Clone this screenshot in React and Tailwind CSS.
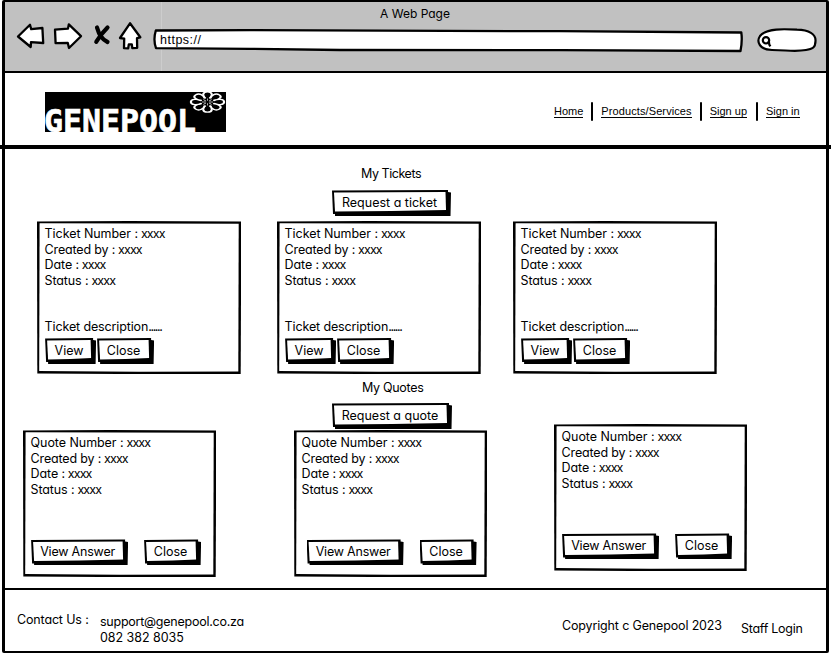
import React from "react";

const font = "font-['Inter','Open_Sans',sans-serif] [font-feature-settings:'cv11','calt'_0]";

function SketchButton({ children, className = "" }) {
  return (
    <button
      type="button"
      className={`relative isolate flex h-[26px] shrink-0 items-center justify-center pr-[4px] leading-none whitespace-nowrap before:absolute before:inset-0 before:-z-20 before:bg-black before:content-[''] before:[clip-path:polygon(0_0.5px,calc(100%-3px)_0,calc(100%-3px)_2px,100%_2.5px,calc(100%-0.5px)_100%,3px_100%,3px_calc(100%-2px),1px_calc(100%-2px))] after:absolute after:inset-0 after:-z-10 after:bg-white after:content-[''] after:[clip-path:polygon(2px_2.5px,calc(100%-5.5px)_2px,calc(100%-5px)_calc(100%-6px),50%_calc(100%-5px),3px_calc(100%-4.5px))] ${className}`}
    >
      {children}
    </button>
  );
}

function Card({ children, className = "" }) {
  return (
    <article
      className={`relative isolate shrink-0 pt-[5px] pl-[7.6px] leading-[15.6px] before:absolute before:inset-0 before:-z-20 before:bg-black before:content-[''] before:[clip-path:polygon(0_0.5px,45%_0,100%_0.5px,100%_50%,calc(100%-0.3px)_100%,40%_100%,0.3px_calc(100%-0.5px))] after:absolute after:inset-0 after:-z-10 after:bg-white after:content-[''] after:[clip-path:polygon(2.6px_2.3px,50%_2.4px,calc(100%-2.3px)_2.8px,calc(100%-2.7px)_calc(100%-2.6px),50%_calc(100%-2.2px),2.2px_calc(100%-3px))] ${className}`}
    >
      {children}
    </article>
  );
}

function Field({ label, className = "" }) {
  return (
    <p className={className}>
      {label} : <span className="-ml-[0.5px] tracking-[-0.9px]">xxxx</span>
    </p>
  );
}

function Details({ kind }) {
  return (
    <>
      <Field label={`${kind} Number`} className="tracking-[-0.06px]" />
      <Field label="Created by" className="tracking-[-0.16px]" />
      <Field label="Date" className="tracking-[-0.12px]" />
      <Field label="Status" className="tracking-[-0.12px]" />
    </>
  );
}

function TicketCard({ className = "" }) {
  return (
    <Card className={`h-[153px] w-[204px] ${className}`}>
      <Details kind="Ticket" />
      <p className="mt-[31px] tracking-[-0.13px]">
        Ticket description<span className="tracking-[-1.4px]">......</span>
      </p>
      <div className="mt-[3px] ml-[0.5px] flex gap-[1px]">
        <SketchButton className="w-[51px] pl-[1px]">View</SketchButton>
        <SketchButton className="w-[57px]">Close</SketchButton>
      </div>
    </Card>
  );
}

function QuoteCard({ className, actions = "ml-[0.5px]" }) {
  return (
    <Card className={`h-[147px] w-[193px] ${className}`}>
      <Details kind="Quote" />
      <div className={`mt-[42px] flex gap-[16px] ${actions}`}>
        <SketchButton className="w-[97px] tracking-[-0.2px]">View Answer</SketchButton>
        <SketchButton className="w-[57px]">Close</SketchButton>
      </div>
    </Card>
  );
}

function BrowserBar() {
  return (
    <div className="relative h-[71px] border-b-[2.5px] border-black bg-[#c1c1c1]">
      <div className="absolute top-0 bottom-0 left-[156px] w-px bg-[#cdcdcd]" />
      <p className="pt-[4px] pr-[1px] text-center text-[12px] leading-[16px]">A Web Page</p>
      <div className="flex pl-[10px]">
        <svg width="128" height="30" viewBox="15 22 128 30" className="shrink-0" fill="#fff" stroke="#000" strokeWidth="2.3" strokeLinejoin="round">
          <path d="M18 36.5 30 24.7 31.2 29.2 42.4 28 43.2 43 31 42.2 30.7 47Z" />
          <path d="M55 29.6 68 28.6 68.8 24.4 81 36.2 69 48 67.8 43 55.6 43.2Z" />
          <path d="M130 23.3 140.3 37.3 137 38.2 137.2 47.8 132.3 48.2 131.8 44.4 128.8 44.4 128.2 48.4 124 48.2 124.2 38.6 120 38Z" />
          <path d="M97 27.5C99 35 103 40 107.5 42M107.5 27.5C104 31 99 37 96.3 41.8" fill="none" strokeWidth="4.2" strokeLinecap="round" />
        </svg>
        <div className="relative isolate ml-[9px] mt-[6px] h-[24px] w-[592px] shrink-0 pl-[8px] font-['Liberation_Sans',Arial,sans-serif] text-[12.5px] leading-[24px] tracking-[0.5px]">
          <svg width="592" height="26" viewBox="152 28 592 26" className="absolute top-0 left-0 -z-10" fill="#fff" stroke="#000" strokeWidth="2.3" strokeLinejoin="round">
            <path d="M155.8 30.5 250 30.2 560 31.2 741.3 32.5Q742.5 41 740.5 51L560 50.2 340 50 250 48.8 156 48.2Q153 40 155.8 30.5Z" />
          </svg>
          <span>https://</span>
        </div>
        <svg width="64" height="30" viewBox="755 25 64 30" className="ml-[11px] mt-[3px] shrink-0" fill="#fff" stroke="#000" strokeWidth="2.2" strokeLinejoin="round">
          <path d="M760 36C766 28 785 29 797 29.7C809 30 816 34 815.5 41C815.5 48 812 49 806 50C795 52 786 50 772 50C760 50 756 42 760 36Z" />
          <circle cx="766" cy="40.3" r="3.2" />
          <path d="M768.8 41 769.3 44.6 770.4 46.3" />
        </svg>
      </div>
    </div>
  );
}

function Logo() {
  const petals = [0, 1, 2, 3, 4, 5, 6, 7];
  return (
    <svg width="181" height="42" viewBox="45 91 181 42" className="shrink-0 overflow-visible">
      <rect x="45" y="92" width="181" height="40" fill="#000" />
      <text x="44" y="131.6" textLength="152" lengthAdjust="spacingAndGlyphs" fill="#fff" stroke="#fff" strokeWidth="0.7" fontWeight="700" fontSize="32.5" fontFamily="'DejaVu Sans Mono','Liberation Mono',monospace">GENEPOOL</text>
      <g transform="translate(207.5 102) scale(1.68 1.02)" fill="#000" stroke="#fff" strokeWidth="1.25">
        {petals.map((p) => (
          <path key={p} transform={`rotate(${p * 45})`} d="M-1.2 -3.6C-3.2 -6-3.2 -9.9 0 -9.9C3.2 -9.9 3.2 -6 1.2 -3.6" />
        ))}
        {petals.map((p) => (
          <path key={`v${p}`} transform={`rotate(${p * 45})`} d="M0 -1.2V-3.4" strokeWidth="0.5" />
        ))}
      </g>
    </svg>
  );
}

function Divider({ className }) {
  return <span className={`h-[19px] w-[2px] rounded-full bg-black ${className}`} />;
}

export default function App() {
  return (
    <div className={`h-[656px] w-[831px] overflow-hidden bg-white text-[12.5px] text-black ${font}`}>
      <div className="ml-[2px] h-[653px] w-[827px] rounded-[2px] border-x-[3px] border-t-[2.5px] border-b-[2.5px] border-black">
        <BrowserBar />
        <header className="-ml-[5px] flex h-[76px] w-[831px] border-b-4 border-black pl-[45px]">
          <div className="mt-[18px]">
            <Logo />
          </div>
          <nav className="ml-[328px] mt-[28px] flex h-[20px] items-center font-['Liberation_Sans',Arial,sans-serif] text-[11px]">
            <a className="border-b border-black leading-[12px]">Home</a>
            <Divider className="mx-[8px]" />
            <a className="border-b border-black leading-[12px] tracking-[0.1px]">Products/Services</a>
            <Divider className="mx-[8px]" />
            <a className="border-b border-black leading-[12px]">Sign up</a>
            <Divider className="ml-[9px] mr-[8px]" />
            <a className="border-b border-black leading-[12px]">Sign in</a>
          </nav>
        </header>

        <main className="-ml-[5px] h-[439px] w-[831px]">
          <section>
            <h2 className="pt-[17px] pl-[361px] leading-[16px] tracking-[-0.45px]">My Tickets</h2>
            <SketchButton className="mt-[8px] ml-[332px] w-[119px]">Request a ticket</SketchButton>
            <div className="mt-[5px] flex pl-[37px]">
              <TicketCard />
              <TicketCard className="ml-[36px]" />
              <TicketCard className="ml-[32px]" />
            </div>
          </section>
          <section>
            <h2 className="pt-[6px] pl-[362px] leading-[16px] tracking-[-0.3px]">My Quotes</h2>
            <SketchButton className="mt-[7px] ml-[332px] w-[120px]">Request a quote</SketchButton>
            <div className="flex items-start pl-[23px]">
              <QuoteCard className="mt-px" />
              <QuoteCard className="mt-px ml-[78px]" actions="ml-[5px]" />
              <QuoteCard className="-mt-[5px] ml-[67px]" />
            </div>
          </section>
        </main>

        <footer className="flex h-[62px] items-start border-t-[2.5px] border-black pl-[12px] leading-[16px]">
          <p className="mt-[22px] w-[83px] tracking-[-0.15px]">Contact Us :</p>
          <p className="mt-[24px] w-[462px]">
            <span className="tracking-[-0.25px]">support@genepool.co.za</span>
            <br />
            <span className="tracking-[-0.05px]">082 382 8035</span>
          </p>
          <p className="mt-[28px] w-[179px] whitespace-nowrap tracking-[-0.15px]">Copyright c Genepool 2023</p>
          <p className="mt-[31px] whitespace-nowrap tracking-[-0.28px]">Staff Login</p>
        </footer>
      </div>
    </div>
  );
}
